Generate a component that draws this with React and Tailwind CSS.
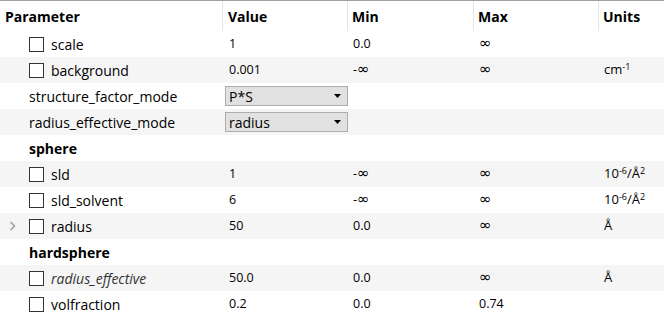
import React from "react";

const Check = () => (
  <span className="inline-block w-[15px] h-[15px] border border-[#333333] bg-white shrink-0" />
);

const Combo = ({ text }) => (
  <div className="flex items-center justify-between h-[20px] w-[123px] border border-[#adadad] bg-[#e1e1e1] pl-[3px] pr-[6px] text-[14px] text-black">
    <span>{text}</span>
    <svg width="7" height="4" viewBox="0 0 7 4"><path d="M0 0H7L3.5 4Z" fill="#000" /></svg>
  </div>
);

const I = ({ neg }) => (
  <span>
    {neg && <span>-</span>}
    <span style={{ fontFamily: '"DejaVu Sans", sans-serif' }} className="text-[15px] leading-none">∞</span>
  </span>
);

const Sup = ({ children }) => <sup className="text-[9px]">{children}</sup>;

const sldUnits = <span>10<Sup>-6</Sup>/Å<Sup>2</Sup></span>;

const rows = [
  { type: "p", name: "scale", value: "1", min: "0.0", max: <I />, units: null },
  { type: "p", name: "background", value: "0.001", min: <I neg />, max: <I />, units: <span>cm<Sup>-1</Sup></span> },
  { type: "c", name: "structure_factor_mode", combo: "P*S" },
  { type: "c", name: "radius_effective_mode", combo: "radius" },
  { type: "h", name: "sphere" },
  { type: "p", name: "sld", value: "1", min: <I neg />, max: <I />, units: sldUnits },
  { type: "p", name: "sld_solvent", value: "6", min: <I neg />, max: <I />, units: sldUnits },
  { type: "p", name: "radius", value: "50", min: "0.0", max: <I />, units: "Å", chevron: true },
  { type: "h", name: "hardsphere" },
  { type: "p", name: "radius_effective", value: "50.0", min: "0.0", max: <I />, units: "Å", italic: true },
  { type: "p", name: "volfraction", value: "0.2", min: "0.0", max: "0.74", units: null },
];

const cols = "grid grid-cols-[223px_125px_126px_125px_65px]";

export default function App() {
  return (
    <div
      className="w-[664px] h-[333px] bg-white overflow-hidden text-black"
      style={{ fontFamily: '"Open Sans", "Noto Sans", sans-serif' }}
    >
      <div className="h-px bg-[#a0a0a0]" />
      <div className={`${cols} h-[30px] items-center text-[14px] font-bold`}>
        <div className="pl-[5px] h-full flex items-center border-r border-[#e5e5e5]">Parameter</div>
        <div className="pl-[5px] h-full flex items-center border-r border-[#e5e5e5]">Value</div>
        <div className="pl-[4px] h-full flex items-center border-r border-[#e5e5e5]">Min</div>
        <div className="pl-[4px] h-full flex items-center border-r border-[#e5e5e5]">Max</div>
        <div className="pl-[4px] h-full flex items-center">Units</div>
      </div>
      {rows.map((r, i) => {
        const bg = i % 2 === 1 ? "bg-[#f5f5f5]" : "bg-white";
        if (r.type === "h") {
          return (
            <div key={i} className={`${bg} h-[26px] flex items-center pl-[29px] text-[14px] font-bold`}>
              {r.name}
            </div>
          );
        }
        if (r.type === "c") {
          return (
            <div key={i} className={`${cols} ${bg} h-[26px] items-center`}>
              <div className="pl-[29px] text-[14px]">{r.name}</div>
              <div className="pl-[2px] col-span-4"><Combo text={r.combo} /></div>
            </div>
          );
        }
        return (
          <div key={i} className={`${cols} ${bg} h-[26px] items-center text-[12.5px]`}>
            <div className="flex items-center text-[14px]">
              <span className="w-[29px] flex justify-center pr-[5px]">
                {r.chevron && (
                  <svg width="7" height="10" viewBox="0 0 7 10"><path d="M1.5 1L5.5 5L1.5 9" fill="none" stroke="#a0a0a0" strokeWidth="1.6" /></svg>
                )}
              </span>
              <Check />
              <span className={`ml-[7px] ${r.italic ? "italic text-[#333]" : ""}`}>{r.name}</span>
            </div>
            <div className="pl-[6px]">{r.value}</div>
            <div className="pl-[5px]">{r.min}</div>
            <div className="pl-[5px]">{r.max}</div>
            <div className="pl-[5px] text-[13px]">{r.units}</div>
          </div>
        );
      })}
    </div>
  );
}
